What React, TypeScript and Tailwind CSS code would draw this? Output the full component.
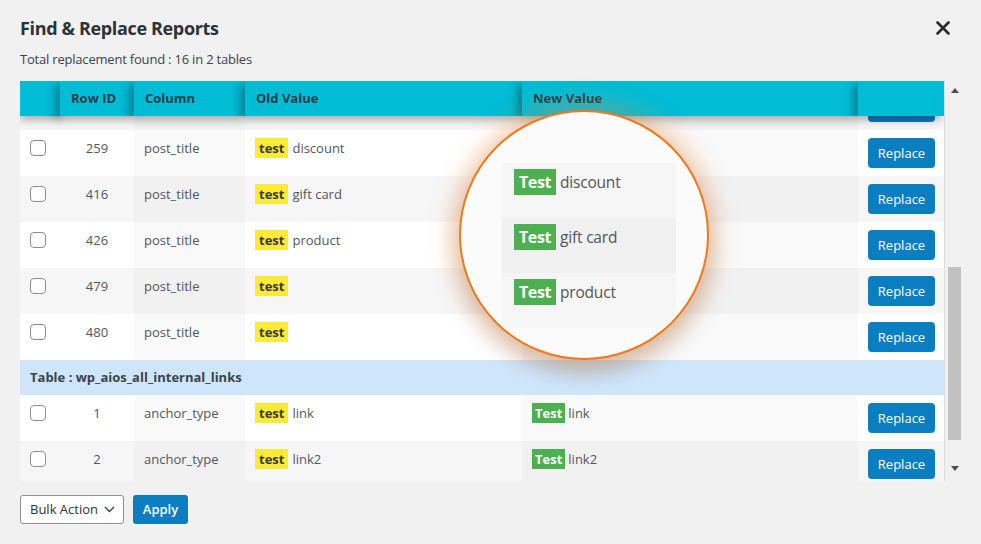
import React from "react";

type Row = { id: string; col: string; old: string; neu: string; showNew: boolean };

const rowsA: Row[] = [
  { id: "259", col: "post_title", old: "discount", neu: "discount", showNew: false },
  { id: "416", col: "post_title", old: "gift card", neu: "gift card", showNew: false },
  { id: "426", col: "post_title", old: "product", neu: "product", showNew: false },
  { id: "479", col: "post_title", old: "", neu: "", showNew: false },
  { id: "480", col: "post_title", old: "", neu: "", showNew: false },
];

const rowsB: Row[] = [
  { id: "1", col: "anchor_type", old: "link", neu: "link", showNew: true },
  { id: "2", col: "anchor_type", old: "link2", neu: "link2", showNew: true },
];

const GRID = "grid grid-cols-[40px_74px_111px_277px_336px_87px]";

function PeekRow() {
  return (
    <div className={`${GRID} h-[46px]`}>
      <div className="bg-[#f6f6f7]" />
      <div className="bg-[#f6f6f7]" />
      <div className="bg-[#f1f1f2]" />
      <div className="bg-[#f6f6f7]" />
      <div className="bg-[#f1f1f2]" />
      <div className="bg-[#f6f6f7] flex items-center pl-[10px]">
        <div className="w-[67px] h-[30px] rounded-[4px] bg-[#0b7ec2]" />
      </div>
    </div>
  );
}

function DataRow({ r, even }: { r: Row; even: boolean }) {
  const a = even ? "bg-[#f6f6f7]" : "bg-white";
  const b = even ? "bg-[#f1f1f2]" : "bg-[#f9f9f9]";
  return (
    <div className={`${GRID} h-[46px] text-[13px] leading-[20px] text-[#50575e]`}>
      <div className={`${a} pl-[10px] pt-[10px]`}>
        <div className="w-[16px] h-[16px] rounded-[4px] border border-[#8c8f94] bg-white" />
      </div>
      <div className={`${a} pt-[8px] text-center`}>{r.id}</div>
      <div className={`${b} pt-[8px] pl-[10px]`}>{r.col}</div>
      <div className={`${a} pt-[8px] pl-[10px] flex items-start`}>
        <span className="bg-[#fbeb36] px-[4px] font-bold text-[#3a3a3a]">test</span>
        {r.old && <span className="ml-[4px]">{r.old}</span>}
      </div>
      <div className={`${b} pt-[8px] pl-[10px] flex items-start`}>
        {r.showNew && (
          <>
            <span className="bg-[#4caf50] px-[3px] font-bold text-white">Test</span>
            {r.neu && <span className="ml-[3px]">{r.neu}</span>}
          </>
        )}
      </div>
      <div className={`${a} flex items-center pl-[10px]`}>
        <button className="w-[67px] h-[30px] rounded-[4px] bg-[#0b7ec2] text-white text-[13px]">
          Replace
        </button>
      </div>
    </div>
  );
}

function HeadCell({ children, first }: { children?: React.ReactNode; first?: boolean }) {
  return (
    <div
      className={`bg-[#01bcd5] h-[35px] flex items-center pl-[11px] font-bold text-[13px] text-[#1c3f4b] ${
        first ? "shadow-[0_4px_8px_rgba(0,0,0,0.3)]" : "shadow-[-5px_4px_8px_rgba(0,0,0,0.3)]"
      }`}
    >
      {children}
    </div>
  );
}

export default function App() {
  return (
    <div
      className="w-[981px] h-[544px] bg-[#f1f1f1] pl-[20px] pr-[17px] pt-[16px] overflow-hidden relative"
      style={{ fontFamily: '"Open Sans", "Noto Sans", sans-serif' }}
    >
      <div className="flex items-center justify-between pr-[14px]">
        <h1 className="text-[18px] leading-[24px] font-bold text-[#2c3338] tracking-[-0.35px]">
          Find &amp; Replace Reports
        </h1>
        <svg width="14" height="14" viewBox="0 0 14 14">
          <path d="M1.5 1.5 L12.5 12.5 M12.5 1.5 L1.5 12.5" stroke="#2b2b2b" strokeWidth="2.6" strokeLinecap="round" />
        </svg>
      </div>
      <div className="mt-[10px] text-[13px] leading-[18px] text-[#3c434a] tracking-[-0.2px]">
        Total replacement found : 16 in 2 tables
      </div>

      <div className="mt-[13px] flex">
        <div className="w-[925px] h-[400px] overflow-hidden bg-white border-r border-[#dcdcde] relative">
          <div className={`${GRID} relative z-10`}>
            <HeadCell first />
            <HeadCell>Row ID</HeadCell>
            <HeadCell>Column</HeadCell>
            <HeadCell>Old Value</HeadCell>
            <HeadCell>New Value</HeadCell>
            <HeadCell />
          </div>
          <div className="h-[365px] overflow-hidden">
            <div className="-mt-[32px]">
              <PeekRow />
              {rowsA.map((r, i) => (
                <DataRow key={r.id} r={r} even={i % 2 === 1} />
              ))}
              <div className="h-[35px] bg-[#cfe6fa] flex items-center pl-[10px] text-[13px] font-bold text-[#3c434a]">
                Table : wp_aios_all_internal_links
              </div>
              {rowsB.map((r, i) => (
                <DataRow key={r.id} r={r} even={i % 2 === 1} />
              ))}
            </div>
          </div>
        </div>
        <div className="w-[19px] h-[400px] flex flex-col items-center">
          <div className="h-[18px] flex items-center justify-center">
            <svg width="8" height="5" viewBox="0 0 8 5">
              <path d="M0 5 L4 0 L8 5 Z" fill="#505050" />
            </svg>
          </div>
          <div className="h-[168px]" />
          <div className="w-[13px] h-[173px] bg-[#c1c1c1]" />
          <div className="flex-1" />
          <div className="h-[26px] flex items-center justify-center">
            <svg width="8" height="5" viewBox="0 0 8 5">
              <path d="M0 0 L8 0 L4 5 Z" fill="#505050" />
            </svg>
          </div>
        </div>
      </div>

      <div className="mt-[14px] flex items-center gap-[9px]">
        <div className="w-[104px] h-[29px] bg-white border border-[#8c8f94] rounded-[3px] flex items-center justify-between pl-[9px] pr-[8px] text-[13px] text-[#2c3338]">
          <span>Bulk Action</span>
          <svg width="11" height="7" viewBox="0 0 11 7">
            <path d="M1 1 L5.5 5.5 L10 1" stroke="#3c434a" strokeWidth="1.4" fill="none" />
          </svg>
        </div>
        <button className="w-[55px] h-[29px] rounded-[3px] bg-[#0b7ec2] text-white text-[13px] font-semibold">
          Apply
        </button>
      </div>

      {/* magnifier overlay */}
      <div className="absolute left-[459px] top-[110px] w-[250px] h-[250px] rounded-full bg-[#fbfbfb] border-2 border-[#f0791f] shadow-[0_0_22px_8px_rgba(245,140,60,0.35),0_12px_24px_rgba(0,0,0,0.18)] z-20 overflow-hidden">
        <div className="pt-[51px] pl-[41px]">
          <div className="w-[174px] flex flex-col">
            {[
              { t: "discount", bg: "bg-[#f6f6f6]" },
              { t: "gift card", bg: "bg-[#f0f0f0]" },
              { t: "product", bg: "bg-[#f6f6f6]" },
            ].map((m) => (
              <div key={m.t} className={`${m.bg} h-[55px] pl-[12px] pt-[6px] flex items-start`}>
                <span className="bg-[#4caf50] h-[26px] px-[5px] leading-[26px] text-[16px] font-bold text-white tracking-[-0.4px]">
                  Test
                </span>
                <span className="ml-[4px] leading-[26px] text-[15.5px] text-[#555] tracking-[-0.2px]">{m.t}</span>
              </div>
            ))}
          </div>
        </div>
      </div>
    </div>
  );
}
